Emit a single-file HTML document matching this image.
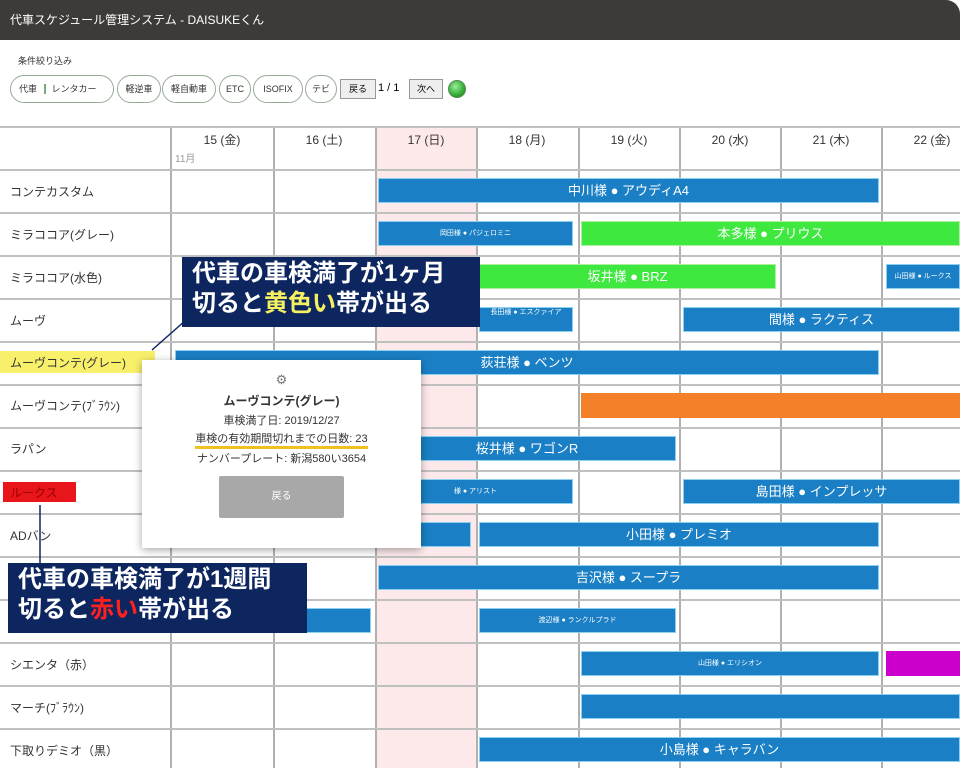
<!DOCTYPE html>
<html><head><meta charset="utf-8"><style>
*{margin:0;padding:0;box-sizing:border-box}
body{width:960px;height:760px;overflow:hidden;background:#fff;font-family:"Liberation Sans","Noto Sans CJK JP",sans-serif;position:relative}
.a{position:absolute}
.title{left:0;top:0;width:960px;height:40px;background:#3d3b38;color:#fff;font-size:12px;line-height:40px;padding-left:10px;border-top-right-radius:14px}
.btn{position:absolute;top:75px;height:28px;border:1px solid #9a9;border-radius:14px;font-size:9px;line-height:26px;text-align:center;color:#333;background:#fff}
.sq{position:absolute;top:79px;height:20px;border:1px solid #999;background:#eee;font-size:9px;line-height:18px;text-align:center}
.vl{position:absolute;top:128px;width:2px;height:640px;background:#b0b0b0}
.hl{position:absolute;left:0;width:960px;height:2px;background:#c0c0c0}
.dh{position:absolute;top:131px;font-size:12px;color:#333;text-align:center;width:100px}
.rl{position:absolute;left:10px;font-size:12px;color:#333}
.bar{position:absolute;height:25px;background:#1a7fc4;border:1px solid #8cd0f0;color:#fff;font-size:13px;text-align:center;line-height:23px;white-space:nowrap;overflow:hidden}
.g{background:#3ee83e;border-color:#aef0a0}
.s{font-size:7px}
.call{position:absolute;background:#0d2660;color:#fff;font-size:24px;font-weight:bold;line-height:30px;padding:2px 0 0 10px;white-space:nowrap;overflow:hidden}
</style></head><body>
<div class="a title">代車スケジュール管理システム - DAISUKEくん</div>
<div class="a" style="left:18px;top:54px;font-size:9px;color:#333">条件絞り込み</div>
<div class="btn" style="left:10px;width:104px;text-align:left;padding-left:8px">代車 <span style="border-left:2px solid #7a7;padding-left:6px;margin-left:4px">レンタカー</span></div>
<div class="btn" style="left:117px;width:44px">軽逆車</div>
<div class="btn" style="left:162px;width:54px">軽自動車</div>
<div class="btn" style="left:219px;width:32px">ETC</div>
<div class="btn" style="left:253px;width:50px">ISOFIX</div>
<div class="btn" style="left:305px;width:32px">テビ</div>
<div class="sq" style="left:340px;width:36px">戻る</div>
<div class="a" style="left:378px;top:82px;font-size:11px">1 / 1</div>
<div class="sq" style="left:409px;width:34px">次へ</div>
<div class="a" style="left:448px;top:80px;width:18px;height:18px;border-radius:50%;background:radial-gradient(circle at 40% 35%,#9e9,#3a3 60%,#272);border:1px solid #585"></div>

<div class="a" style="left:376px;top:128px;width:101px;height:640px;background:#fde9ea"></div>
<div class="vl" style="left:170px"></div><div class="vl" style="left:273px"></div><div class="vl" style="left:375px"></div><div class="vl" style="left:476px"></div><div class="vl" style="left:578px"></div><div class="vl" style="left:679px"></div><div class="vl" style="left:780px"></div><div class="vl" style="left:881px"></div>
<div class="hl" style="top:126px"></div>
<div class="hl" style="top:169px"></div><div class="hl" style="top:212px"></div><div class="hl" style="top:255px"></div><div class="hl" style="top:298px"></div><div class="hl" style="top:341px"></div><div class="hl" style="top:384px"></div><div class="hl" style="top:427px"></div><div class="hl" style="top:470px"></div><div class="hl" style="top:513px"></div><div class="hl" style="top:556px"></div><div class="hl" style="top:599px"></div><div class="hl" style="top:642px"></div><div class="hl" style="top:685px"></div><div class="hl" style="top:728px"></div>

<div class="dh" style="left:172px">15 (金)</div><div class="a" style="left:175px;top:150px;font-size:10px;color:#999">11月</div>
<div class="dh" style="left:274px">16 (土)</div><div class="dh" style="left:376px">17 (日)</div><div class="dh" style="left:477px">18 (月)</div><div class="dh" style="left:579px">19 (火)</div><div class="dh" style="left:680px">20 (水)</div><div class="dh" style="left:781px">21 (木)</div><div class="dh" style="left:882px">22 (金)</div>

<div class="rl" style="top:183px">コンテカスタム</div>
<div class="rl" style="top:226px">ミラココア(グレー)</div>
<div class="rl" style="top:269px">ミラココア(水色)</div>
<div class="rl" style="top:312px">ムーヴ</div>
<div class="a" style="left:0;top:351px;width:155px;height:22px;background:#f8f06a"></div>
<div class="rl" style="top:354px">ムーヴコンテ(グレー)</div>
<div class="rl" style="top:397px">ムーヴコンテ(ﾌﾞﾗｳﾝ)</div>
<div class="rl" style="top:440px">ラパン</div>
<div class="a" style="left:3px;top:482px;width:73px;height:20px;background:#e8151b"></div>
<div class="rl" style="top:484px;color:#900">ルークス</div>
<div class="rl" style="top:527px">ADバン</div>
<div class="rl" style="top:656px">シエンタ（赤）</div>
<div class="rl" style="top:699px">マーチ(ﾌﾞﾗｳﾝ)</div>
<div class="rl" style="top:742px">下取りデミオ（黒）</div>

<div class="bar" style="left:378px;top:178px;width:501px">中川様 ● アウディA4</div>
<div class="bar s" style="left:378px;top:221px;width:195px">岡田様 ● パジェロミニ</div>
<div class="bar g" style="left:581px;top:221px;width:379px">本多様 ● プリウス</div>
<div class="bar g" style="left:479px;top:264px;width:297px">坂井様 ● BRZ</div>
<div class="bar s" style="left:886px;top:264px;width:74px">山田様 ● ルークス</div>
<div class="bar s" style="left:479px;top:307px;width:94px;line-height:10px">長田様 ● エスクァイア</div>
<div class="bar" style="left:683px;top:307px;width:277px">間様 ● ラクティス</div>
<div class="bar" style="left:175px;top:350px;width:704px">荻荘様 ● ベンツ</div>
<div class="a" style="left:581px;top:393px;width:379px;height:25px;background:#f5802a"></div>
<div class="bar" style="left:378px;top:436px;width:298px">桜井様 ● ワゴンR</div>
<div class="bar s" style="left:378px;top:479px;width:195px">様 ● アリスト</div>
<div class="bar" style="left:683px;top:479px;width:277px">島田様 ● インプレッサ</div>
<div class="bar" style="left:378px;top:522px;width:93px"></div>
<div class="bar" style="left:479px;top:522px;width:400px">小田様 ● プレミオ</div>
<div class="bar" style="left:378px;top:565px;width:501px">吉沢様 ● スープラ</div>
<div class="bar" style="left:175px;top:608px;width:196px"></div>
<div class="bar s" style="left:479px;top:608px;width:197px">渡辺様 ● ランクルプラド</div>
<div class="bar s" style="left:581px;top:651px;width:298px">山田様 ● エリシオン</div>
<div class="a" style="left:886px;top:651px;width:74px;height:25px;background:#cc00cc"></div>
<div class="bar" style="left:581px;top:694px;width:379px"></div>
<div class="bar" style="left:479px;top:737px;width:481px">小島様 ● キャラバン</div>

<div class="call" style="left:182px;top:257px;width:298px;height:70px">代車の車検満了が1ヶ月<br>切ると<span style="color:#f4f060">黄色い</span>帯が出る</div>
<svg class="a" style="left:0;top:0" width="960" height="760"><line x1="186" y1="320" x2="152" y2="350" stroke="#0d2660" stroke-width="1.5"/><line x1="40" y1="505" x2="40" y2="563" stroke="#0d2660" stroke-width="1.5"/></svg>
<div class="call" style="left:8px;top:563px;width:299px;height:70px">代車の車検満了が1週間<br>切ると<span style="color:#ff2020">赤い</span>帯が出る</div>

<div class="a" style="left:142px;top:360px;width:279px;height:188px;background:#fff;box-shadow:0 2px 8px rgba(0,0,0,.35);text-align:center;color:#333">
<div style="margin-top:12px;font-size:13px;color:#777">⚙</div>
<div style="font-size:12px;font-weight:bold;margin-top:4px">ムーヴコンテ(グレー)</div>
<div style="font-size:11px;margin-top:3px">車検満了日: 2019/12/27</div>
<div style="font-size:11px;margin-top:2px;display:inline-block;border-bottom:3px solid #f0c020">車検の有効期間切れまでの日数: 23</div>
<div style="font-size:11px;margin-top:1px">ナンバープレート: 新潟580い3654</div>
<div style="margin:10px auto 0;width:125px;height:42px;background:#a8a8a8;border-radius:2px;color:#fff;font-size:10px;line-height:42px">戻る</div>
</div>
</body></html>
